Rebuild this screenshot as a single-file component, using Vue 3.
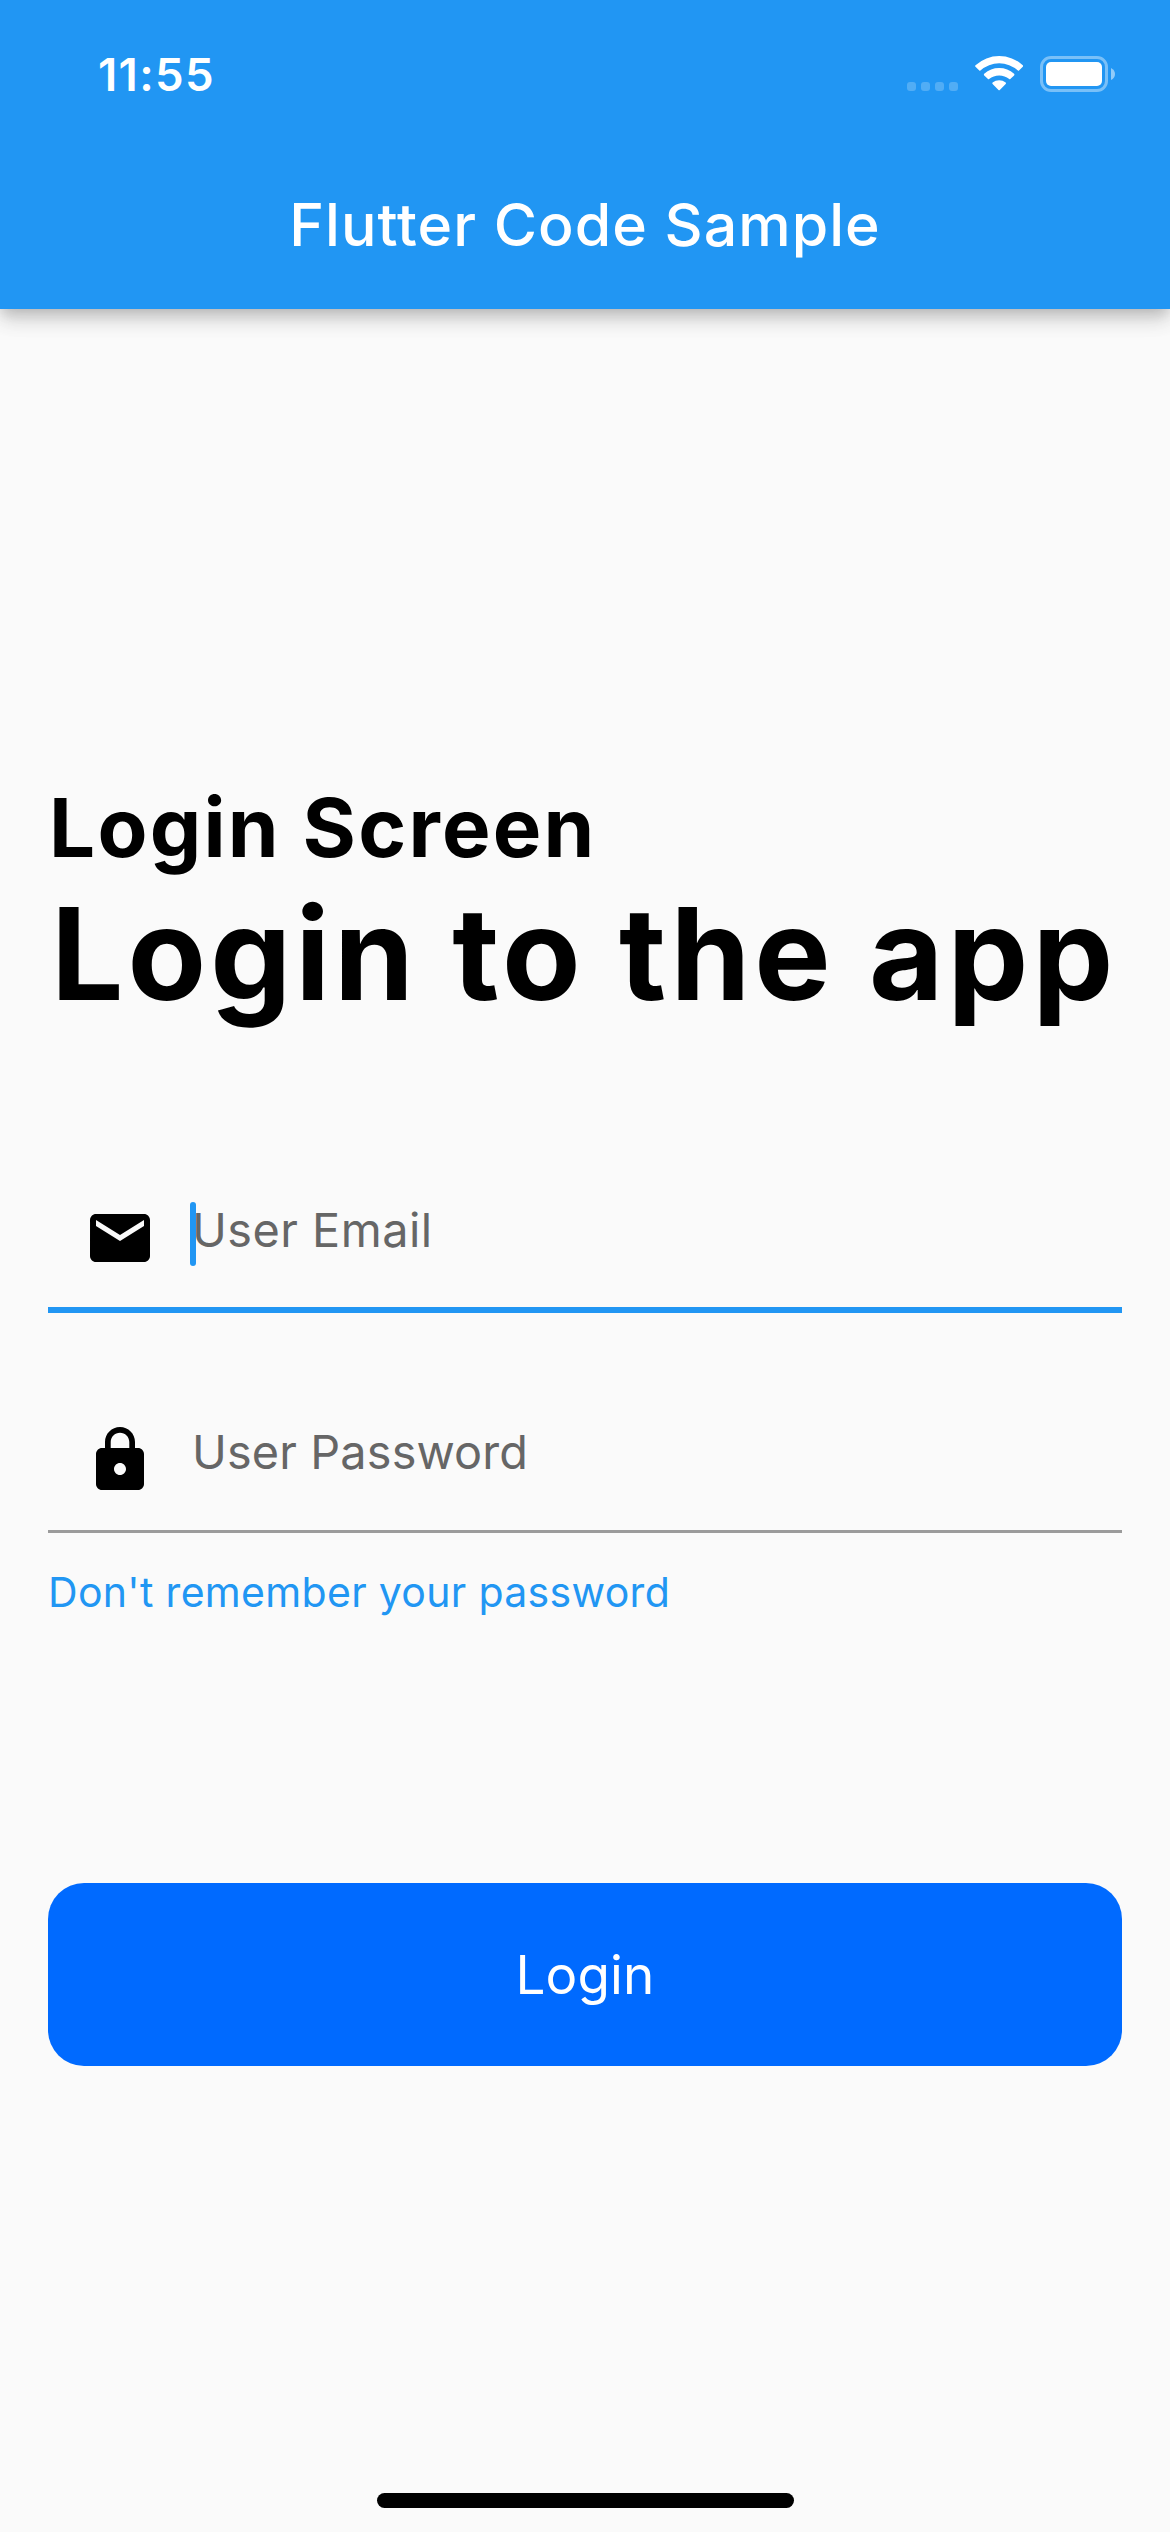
<script setup>
const signalDots = 4
</script>

<template>
  <div class="screen">
    <header class="app-bar">
      <div class="status-bar">
        <span class="time">11:55</span>
        <div class="status-icons">
          <div class="signal">
            <i v-for="n in signalDots" :key="n" class="dot"></i>
          </div>
          <svg class="wifi" viewBox="0 0 48 36" fill="#fff">
            <path d="M0.5 10.2A35 35 0 0 1 47.8 10.2Q48.6 11 47.8 11.8L44 15.6Q43.5 16.1 42.9 15.5A28 28 0 0 0 5.4 15.5Q4.8 16.1 4.3 15.6L0.5 11.8Q-0.3 11 0.5 10.2Z" />
            <path d="M9.2 18.8A22.5 22.5 0 0 1 39.1 18.8Q39.9 19.6 39.1 20.4L35.3 24.1Q34.8 24.6 34.2 24.1A15.5 15.5 0 0 0 14.1 24.1Q13.5 24.6 13 24.1L9.2 20.4Q8.4 19.6 9.2 18.8Z" />
            <path d="M17.6 27.6A10.5 10.5 0 0 1 30.7 27.6Q31.4 28.3 30.7 29L24.8 34.9Q24.15 35.5 23.5 34.9L17.6 29Q16.9 28.3 17.6 27.6Z" />
          </svg>
          <div class="battery">
            <div class="battery-shell"><div class="battery-fill"></div></div>
            <svg class="battery-cap" viewBox="0 0 4 12"><path d="M0 0Q4 2 4 6T0 12Z" fill="#fff" fill-opacity=".5" /></svg>
          </div>
        </div>
      </div>
      <div class="title">Flutter Code Sample</div>
    </header>

    <main class="content">
      <h2 class="subtitle">Login Screen</h2>
      <h1 class="headline">Login to the app</h1>

      <div class="field focused">
        <svg class="icon" viewBox="0 0 24 24">
          <path d="M20 4H4c-1.1 0-1.99.9-1.99 2L2 18c0 1.1.9 2 2 2h16c1.1 0 2-.9 2-2V6c0-1.1-.9-2-2-2zm0 4l-8 5-8-5V6l8 5 8-5v2z" />
        </svg>
        <span class="hint email">User Email</span>
      </div>

      <div class="field">
        <svg class="icon" viewBox="0 0 24 24">
          <path d="M18 8h-1V6c0-2.76-2.24-5-5-5S7 3.24 7 6v2H6c-1.1 0-2 .9-2 2v10c0 1.1.9 2 2 2h12c1.1 0 2-.9 2-2V10c0-1.1-.9-2-2-2zm-6 9c-1.1 0-2-.9-2-2s.9-2 2-2 2 .9 2 2-.9 2-2 2zm3.1-9H8.9V6c0-1.71 1.39-3.1 3.1-3.1 1.71 0 3.1 1.39 3.1 3.1v2z" />
        </svg>
        <span class="hint">User Password</span>
      </div>

      <a class="forgot">Don't remember your password</a>
      <button class="login">Login</button>
    </main>

    <div class="home-indicator"></div>
  </div>
</template>

<style>
body {
  background: #fafafa;
}
</style>

<style scoped>
.screen {
  display: flex;
  flex-direction: column;
  width: 1170px;
  height: 2532px;
  overflow: hidden;
  background: #fafafa;
  color: #000;
  font-family: Inter, "Liberation Sans", sans-serif;
}

.app-bar {
  flex: none;
  height: 309px;
  background: #2196f3;
  color: #fff;
  box-shadow: 0 6px 12px -3px rgba(0, 0, 0, 0.14), 0 12px 17px rgba(0, 0, 0, 0.12), 0 3px 30px rgba(0, 0, 0, 0.08);
}

.status-bar {
  display: flex;
  justify-content: space-between;
  height: 140px;
  padding: 0 55px 0 98px;
}

.time {
  margin-top: 45px;
  font-size: 45.5px;
  font-weight: 600;
  line-height: 60px;
  letter-spacing: 1.35px;
}

.status-icons {
  display: flex;
  align-items: flex-end;
  height: 91px;
}

.signal {
  display: flex;
  gap: 5px;
  margin-right: 17px;
}

.dot {
  width: 9px;
  height: 9px;
  border-radius: 3px;
  background: rgba(255, 255, 255, 0.22);
}

.wifi {
  width: 48px;
  height: 36px;
  margin-right: 17px;
}

.battery {
  display: flex;
  align-items: center;
  gap: 3px;
  margin-bottom: -1px;
}

.battery-shell {
  box-sizing: border-box;
  width: 68px;
  height: 36px;
  padding: 3px;
  border: 3px solid rgba(255, 255, 255, 0.4);
  border-radius: 11px;
}

.battery-fill {
  height: 24px;
  border-radius: 5px;
  background: #fff;
}

.battery-cap {
  width: 4px;
  height: 12px;
}

.title {
  height: 169px;
  font-size: 59px;
  font-weight: 500;
  line-height: 169px;
  letter-spacing: 1.02px;
  text-align: center;
}

.content {
  display: flex;
  flex-direction: column;
  flex: 1;
  padding: 470px 48px 0;
}

.subtitle,
.headline {
  margin: 0;
  font-weight: 700;
  white-space: nowrap;
}

.subtitle {
  padding-left: 1px;
  font-size: 81.6px;
  line-height: 97px;
  letter-spacing: 2.25px;
}

.headline {
  padding-left: 3px;
  font-size: 128.3px;
  line-height: 156px;
  letter-spacing: 4px;
}

.field {
  display: flex;
  box-sizing: border-box;
  height: 147px;
  margin-top: 73px;
  padding: 38px 0 0 36px;
  border-bottom: 3px solid #9b9b9b;
}

.field.focused {
  height: 149px;
  margin-top: 132px;
  border-bottom: 6px solid #2196f3;
}

.icon {
  width: 72px;
  height: 72px;
}

.hint {
  position: relative;
  height: 56px;
  margin-left: 36px;
  color: #666;
  font-size: 46.8px;
  line-height: 56px;
  letter-spacing: 0.15px;
}

.hint.email {
  letter-spacing: 0.5px;
}

.hint.email::before {
  content: "";
  position: absolute;
  top: 0;
  left: -2px;
  width: 6px;
  height: 64px;
  border-radius: 3px;
  background: #2196f3;
}

.forgot {
  margin-top: 29px;
  color: #2196f3;
  font-size: 41px;
  line-height: 60px;
  letter-spacing: 0.32px;
}

.login {
  height: 183px;
  margin-top: 260.5px;
  padding: 2px 0 0;
  border: 0;
  border-radius: 36px;
  background: #006aff;
  color: #fff;
  font-family: inherit;
  font-size: 53px;
  letter-spacing: 0.1px;
}

.home-indicator {
  flex: none;
  align-self: center;
  width: 417px;
  height: 15px;
  margin-bottom: 24px;
  border-radius: 8px;
  background: #000;
}
</style>
